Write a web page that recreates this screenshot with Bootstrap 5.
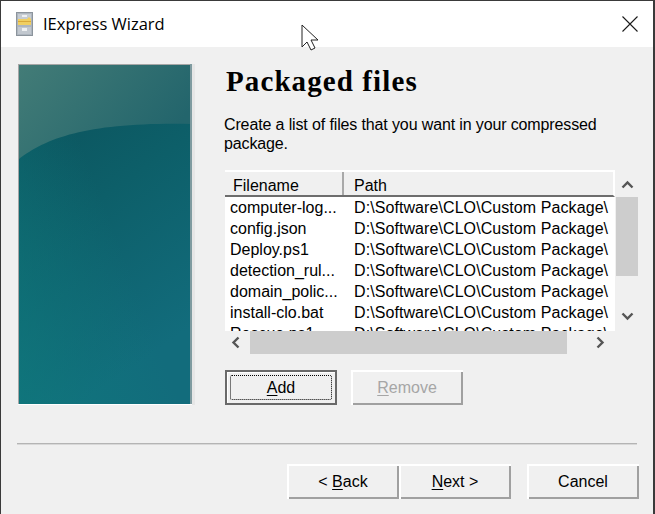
<!DOCTYPE html>
<html lang="en">
<head>
<meta charset="utf-8">
<title>IExpress Wizard</title>
<link href="https://cdn.jsdelivr.net/npm/bootstrap@5.3.0/dist/css/bootstrap.min.css" rel="stylesheet">
<style>
html,body{margin:0;height:514px;overflow:hidden;background:#f0f0f0}
body{font-family:"Liberation Sans",Arial,sans-serif;font-size:16px;color:#000}
.win{width:655px;height:514px;border-left:1px solid #3a3a3a;border-top:1px solid #3a3a3a;border-right:2px solid #3a3a3a;position:relative;overflow:hidden;background:#f0f0f0}
.tbar{height:46px;background:#fff;padding-left:15px;padding-right:15px}
.tname{font-family:"Open Sans",sans-serif;font-size:16.500px;margin-left:10px}
.wiz{height:396px;padding:17px 0 0 17px}
.art{width:177px;height:341px;flex:none;background:#fff;border-right:3px solid #e6e6e6}
.art svg{display:block}
.pane{padding-left:30px;width:441px}
.head{font-family:"Liberation Serif",serif;font-weight:700;font-size:29px;letter-spacing:1.100px;line-height:30px;margin:2px 0 0 1px}
.desc{line-height:19px;margin:19px 0 0 -1px;width:390px;letter-spacing:-.13px}
.lv{width:413px;height:184px;margin-top:17px;display:grid;grid-template-columns:390px 23px;grid-template-rows:161px 23px}
.lvbox{overflow:hidden;background:#fff}
.lvh{height:27px;background:#f0f0f0;border-bottom:2px solid #6d6d6d;border-top:2px solid #fff;border-right:2px solid #fff}
.hc{line-height:27px;padding-left:8px;height:23px}
.hc1{width:119px;box-shadow:inset -2px 0 0 #a9a9a9}
.hc2{padding-left:10px}
.lvrow{height:21px;line-height:21px;white-space:nowrap}
.c1{width:125px;padding-left:5px;flex:none;overflow:hidden}
.c2{flex:none;padding-left:4px;letter-spacing:.08px}
.sbv,.sbh{background:#f0f0f0;position:relative}
.sbv .thumb{width:22px;height:79px;margin-top:27px;background:#cdcdcd;margin-left:1px}
.sbh .thumb{height:23px;width:317px;margin-left:25px;background:#cdcdcd}
.arrow{position:absolute;display:block}
.btnw{width:112px;height:35px;padding:0;border-radius:0;background:#f0f0f0;font-size:16px;color:#000;line-height:31px;border:0;box-shadow:inset 2px 2px 0 #fff,inset -2px -2px 0 #a0a0a0;font-family:inherit}
.btnw:disabled{opacity:1;background:#f0f0f0;color:#a6a6a6;border:0}
.btnw u{text-underline-offset:2px}
.btndef{box-shadow:inset 0 0 0 2px #696969,inset 3px 3px 0 #fff;position:relative}
.btndef::after{content:"";position:absolute;inset:5px;border:1px dotted #000;border-radius:2px}
.addrow{margin-top:16px;gap:14px}
.rule{height:2px;margin:0 0 0 16px;width:620px;background:#b4b4b4;border-bottom:1px solid #d8d8d8}
.foot{padding:19px 0 0 286px}
.gapb{margin-left:16px}
.ptr{position:absolute;left:300px;top:23px}
</style>
</head>
<body>
<div class="win">
  <div class="tbar d-flex align-items-center justify-content-between">
    <div class="d-flex align-items-center">
      <svg width="17" height="24" viewBox="0 0 17 24" aria-hidden="true">
        <rect x=".5" y=".5" width="16" height="23" fill="#aeb6bf" stroke="#8c949c"/>
        <rect x="2" y="2" width="13" height="5" fill="#c6ccd2"/>
        <rect x="6" y="3" width="5" height="2" fill="#eef0f2"/>
        <path d="M2 7h9l2-2 2 2v6H2z" fill="#f0cf62"/>
        <path d="M2 9h13v1H2z" fill="#d9a93a"/>
        <rect x="2" y="15" width="13" height="7" fill="#c2c8cf"/>
        <rect x="6" y="16" width="5" height="3" fill="#eef0f2"/>
      </svg>
      <span class="tname">IExpress Wizard</span>
    </div>
    <svg width="16" height="16" viewBox="0 0 16 16" aria-hidden="true"><path d="M.5.5l15 15M15.500.5l-15 15" stroke="#1a1a1a" stroke-width="1.100" fill="none"/></svg>
  </div>
  <div class="wiz d-flex">
    <div class="art">
      <svg width="174" height="340" viewBox="0 0 174 340" aria-hidden="true">
        <defs>
          <linearGradient id="base" x1="0" y1="0" x2=".35" y2="1"><stop offset="0" stop-color="#0b5059"/><stop offset=".5" stop-color="#0d5f69"/><stop offset="1" stop-color="#126c7c"/></linearGradient>
          <linearGradient id="leftglow" x1="0" y1="1" x2=".6" y2=".55"><stop offset="0" stop-color="#0f7a7d" stop-opacity=".7"/><stop offset="1" stop-color="#0f7a7d" stop-opacity="0"/></linearGradient>
          <linearGradient id="gloss" x1="0" y1="0" x2="1" y2=".45"><stop offset="0" stop-color="#437c77"/><stop offset="1" stop-color="#23656c"/></linearGradient>
        </defs>
        <rect width="174" height="340" fill="url(#base)"/>
        <rect width="174" height="340" fill="url(#leftglow)"/>
        <path d="M0 96C30 72 75 58 174 60V0H0z" fill="url(#gloss)"/>
        <rect x="0" y="0" width="174" height="1" fill="#a6a6a6"/>
        <rect x="0" y="0" width="1" height="340" fill="#a6a6a6"/>
        <rect x="172" y="0" width="2" height="340" fill="#7f9ba0"/>
      </svg>
    </div>
    <div class="pane">
      <div class="head">Packaged files</div>
      <p class="desc">Create a list of files that you want in your compressed package.</p>
      <div class="lv">
        <div class="lvbox">
          <div class="lvh d-flex"><div class="hc hc1">Filename</div><div class="hc hc2">Path</div></div>
          <div class="lvrow d-flex"><div class="c1">computer-log...</div><div class="c2">D:\Software\CLO\Custom Package\</div></div>
          <div class="lvrow d-flex"><div class="c1">config.json</div><div class="c2">D:\Software\CLO\Custom Package\</div></div>
          <div class="lvrow d-flex"><div class="c1">Deploy.ps1</div><div class="c2">D:\Software\CLO\Custom Package\</div></div>
          <div class="lvrow d-flex"><div class="c1">detection_rul...</div><div class="c2">D:\Software\CLO\Custom Package\</div></div>
          <div class="lvrow d-flex"><div class="c1">domain_polic...</div><div class="c2">D:\Software\CLO\Custom Package\</div></div>
          <div class="lvrow d-flex"><div class="c1">install-clo.bat</div><div class="c2">D:\Software\CLO\Custom Package\</div></div>
          <div class="lvrow d-flex"><div class="c1">Rescue.ps1</div><div class="c2">D:\Software\CLO\Custom Package\</div></div>
        </div>
        <div class="sbv">
          <svg class="arrow" style="left:6px;top:10px" width="13" height="9" viewBox="0 0 13 9"><path d="M1.500 7.500l5-5 5 5" fill="none" stroke="#555" stroke-width="2.400"/></svg>
          <div class="thumb"></div>
          <svg class="arrow" style="left:6px;top:142px" width="13" height="9" viewBox="0 0 13 9"><path d="M1.500 1.500l5 5 5-5" fill="none" stroke="#555" stroke-width="2.400"/></svg>
        </div>
        <div class="sbh">
          <svg class="arrow" style="left:6px;top:5px" width="9" height="13" viewBox="0 0 9 13"><path d="M7.500 1.500l-5 5 5 5" fill="none" stroke="#555" stroke-width="2.400"/></svg>
          <div class="thumb"></div>
          <svg class="arrow" style="left:371px;top:5px" width="9" height="13" viewBox="0 0 9 13"><path d="M1.500 1.500l5 5-5 5" fill="none" stroke="#555" stroke-width="2.400"/></svg>
        </div>
        <div></div>
      </div>
      <div class="addrow d-flex">
        <button type="button" class="btn btnw btndef"><u>A</u>dd</button>
        <button type="button" class="btn btnw" disabled><u>R</u>emove</button>
      </div>
    </div>
  </div>
  <div class="rule"></div>
  <div class="foot d-flex">
    <button type="button" class="btn btnw">&lt; <u>B</u>ack</button>
    <button type="button" class="btn btnw"><u>N</u>ext &gt;</button>
    <button type="button" class="btn btnw gapb">Cancel</button>
  </div>
  <svg class="ptr" width="20" height="28" viewBox="0 0 20 28" aria-hidden="true"><path d="M1 1v22l5-5 4 8 4-2-4-8h7z" fill="#fff" stroke="#222" stroke-width="1"/></svg>
</div>
</body>
</html>
